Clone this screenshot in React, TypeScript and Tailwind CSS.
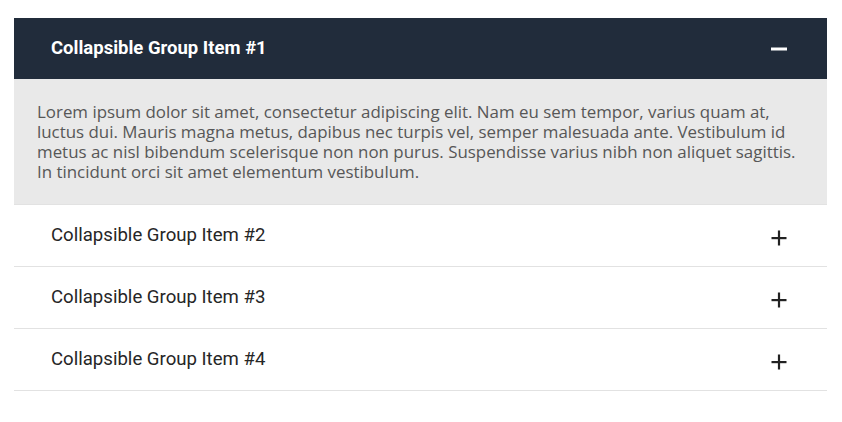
import React from "react";

function Minus() {
  return (
    <svg width="16" height="16" viewBox="0 0 16 16" className="block">
      <rect x="0" y="6.5" width="16" height="3" fill="#ffffff" />
    </svg>
  );
}

function Plus() {
  return (
    <svg width="16" height="16" viewBox="0 0 16 16" className="block">
      <rect x="0.5" y="7" width="15" height="2.2" fill="#222222" />
      <rect x="6.9" y="0.5" width="2.2" height="15" fill="#222222" />
    </svg>
  );
}

export default function App() {
  const items = ["Collapsible Group Item #2", "Collapsible Group Item #3", "Collapsible Group Item #4"];
  return (
    <div className="w-[842px] h-[422px] bg-white pt-[18px] px-[14px]" style={{ fontFamily: "Roboto, 'Liberation Sans', sans-serif" }}>
      <div className="w-[813px]">
        <div className="h-[61px] bg-[#212c3b] flex items-center justify-between pl-[37px] pr-[40px]">
          <span className="text-white text-[18.5px] font-bold leading-none">Collapsible Group Item #1</span>
          <Minus />
        </div>
        <div
          className="bg-[#e9e9e9] pl-[23px] pr-[10px] pt-[23px] pb-[22px] text-[16.9px] leading-[20px] text-[#575757] border-b border-[#e2e2e2]"
          style={{ fontFamily: "'Open Sans', 'Noto Sans', sans-serif" }}
        >
          Lorem ipsum dolor sit amet, consectetur adipiscing elit. Nam eu sem tempor, varius quam at,
          <br />
          luctus dui. Mauris magna metus, dapibus nec turpis vel, semper malesuada ante. Vestibulum id
          <br />
          metus ac nisl bibendum scelerisque non non purus. Suspendisse varius nibh non aliquet sagittis.
          <br />
          In tincidunt orci sit amet elementum vestibulum.
        </div>
        {items.map((t) => (
          <div key={t} className="h-[62px] border-b border-[#e2e2e2] flex items-center justify-between pl-[37px] pr-[40px]">
            <span className="text-[#262626] text-[18.6px] font-normal leading-none">{t}</span>
            <span className="mt-[4px]"><Plus /></span>
          </div>
        ))}
      </div>
    </div>
  );
}
